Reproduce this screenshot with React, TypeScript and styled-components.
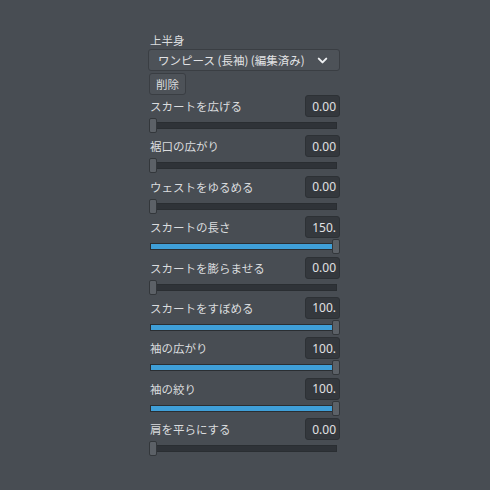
import React from "react"
import styled, { createGlobalStyle } from "styled-components"
import { ChevronDown } from "lucide-react"

const GlobalStyle = createGlobalStyle`
  html, body {
    margin: 0;
    padding: 0;
    background: #484d53;
  }
  body {
    font-family: "Noto Sans CJK JP", "Noto Sans", sans-serif;
    color: #dadcde;
  }
`

const Page = styled.div`
  width: 490px;
  height: 490px;
  background: #484d53;
  padding: 32px 0 0 148px;
  box-sizing: border-box;
`

const Panel = styled.div`
  width: 192px;
  display: flex;
  flex-direction: column;
`

const SectionLabel = styled.div`
  font-size: 11.5px;
  line-height: 16px;
  height: 16px;
  padding-left: 2px;
`

const Dropdown = styled.button`
  margin-top: 1px;
  height: 22px;
  display: flex;
  align-items: center;
  justify-content: space-between;
  padding: 0 9px 0 9px;
  background: #4d5258;
  border: 1px solid #3a3e43;
  border-radius: 3px;
  color: #e2e3e5;
  font-family: inherit;
  font-size: 11.5px;
  cursor: pointer;
`

const DeleteButton = styled.button`
  margin-top: 2px;
  align-self: flex-start;
  margin-left: 1px;
  height: 22px;
  width: 37px;
  padding: 0;
  background: #4d5258;
  border: 1px solid #3a3e43;
  border-radius: 3px;
  color: #dadcde;
  font-family: inherit;
  font-size: 11.5px;
`

const Row = styled.div`
  height: 40.375px;
  display: flex;
  flex-direction: column;
  &:first-of-type {
    margin-top: 1px;
  }
`

const RowHead = styled.div`
  height: 22px;
  display: flex;
  align-items: center;
  justify-content: space-between;
`

const RowLabel = styled.span`
  font-size: 11.5px;
  padding-left: 2px;
`

const ValueBox = styled.div`
  width: 35px;
  height: 22px;
  box-sizing: border-box;
  background: #34383d;
  border: 1px solid #2d3135;
  border-radius: 3px;
  display: flex;
  align-items: center;
  justify-content: flex-end;
  padding-right: 3px;
  overflow: hidden;
  font-family: "Noto Sans", sans-serif;
  font-size: 12px;
  color: #e0e1e3;
`

const SliderArea = styled.div`
  position: relative;
  height: 16px;
  width: 192px;
`

const Track = styled.div`
  position: absolute;
  left: 2px;
  top: 5px;
  width: 187px;
  height: 7px;
  box-sizing: border-box;
  background: #2f3338;
  border: 1px solid #2a2e32;
`

const Fill = styled.div`
  height: 100%;
  background: #3f9fd8;
`

const Thumb = styled.div`
  position: absolute;
  top: 1px;
  width: 8px;
  height: 15px;
  box-sizing: border-box;
  background: #5c6167;
  border: 1px solid #33373b;
  border-radius: 2px;
`

type Param = { label: string; value: string; ratio: number }

const params: Param[] = [
  { label: "スカートを広げる", value: "0.00", ratio: 0 },
  { label: "裾口の広がり", value: "0.00", ratio: 0 },
  { label: "ウェストをゆるめる", value: "0.00", ratio: 0 },
  { label: "スカートの長さ", value: "150.", ratio: 1 },
  { label: "スカートを膨らませる", value: "0.00", ratio: 0 },
  { label: "スカートをすぼめる", value: "100.", ratio: 1 },
  { label: "袖の広がり", value: "100.", ratio: 1 },
  { label: "袖の絞り", value: "100.", ratio: 1 },
  { label: "肩を平らにする", value: "0.00", ratio: 0 },
]

const Slider = ({ ratio }: { ratio: number }) => {
  const thumbLeft = 1 + ratio * 183
  return (
    <SliderArea>
      <Track>{ratio > 0 && <Fill style={{ width: `${ratio * 100}%` }} />}</Track>
      <Thumb style={{ left: thumbLeft }} />
    </SliderArea>
  )
}

export default function App() {
  return (
    <>
      <GlobalStyle />
      <Page>
        <Panel>
          <SectionLabel>上半身</SectionLabel>
          <Dropdown>
            <span>ワンピース (長袖) (編集済み)</span>
            <ChevronDown size={15} strokeWidth={3.2} color="#eef0f2" />
          </Dropdown>
          <DeleteButton>削除</DeleteButton>
          {params.map((p) => (
            <Row key={p.label}>
              <RowHead>
                <RowLabel>{p.label}</RowLabel>
                <ValueBox>{p.value}</ValueBox>
              </RowHead>
              <Slider ratio={p.ratio} />
            </Row>
          ))}
        </Panel>
      </Page>
    </>
  )
}
